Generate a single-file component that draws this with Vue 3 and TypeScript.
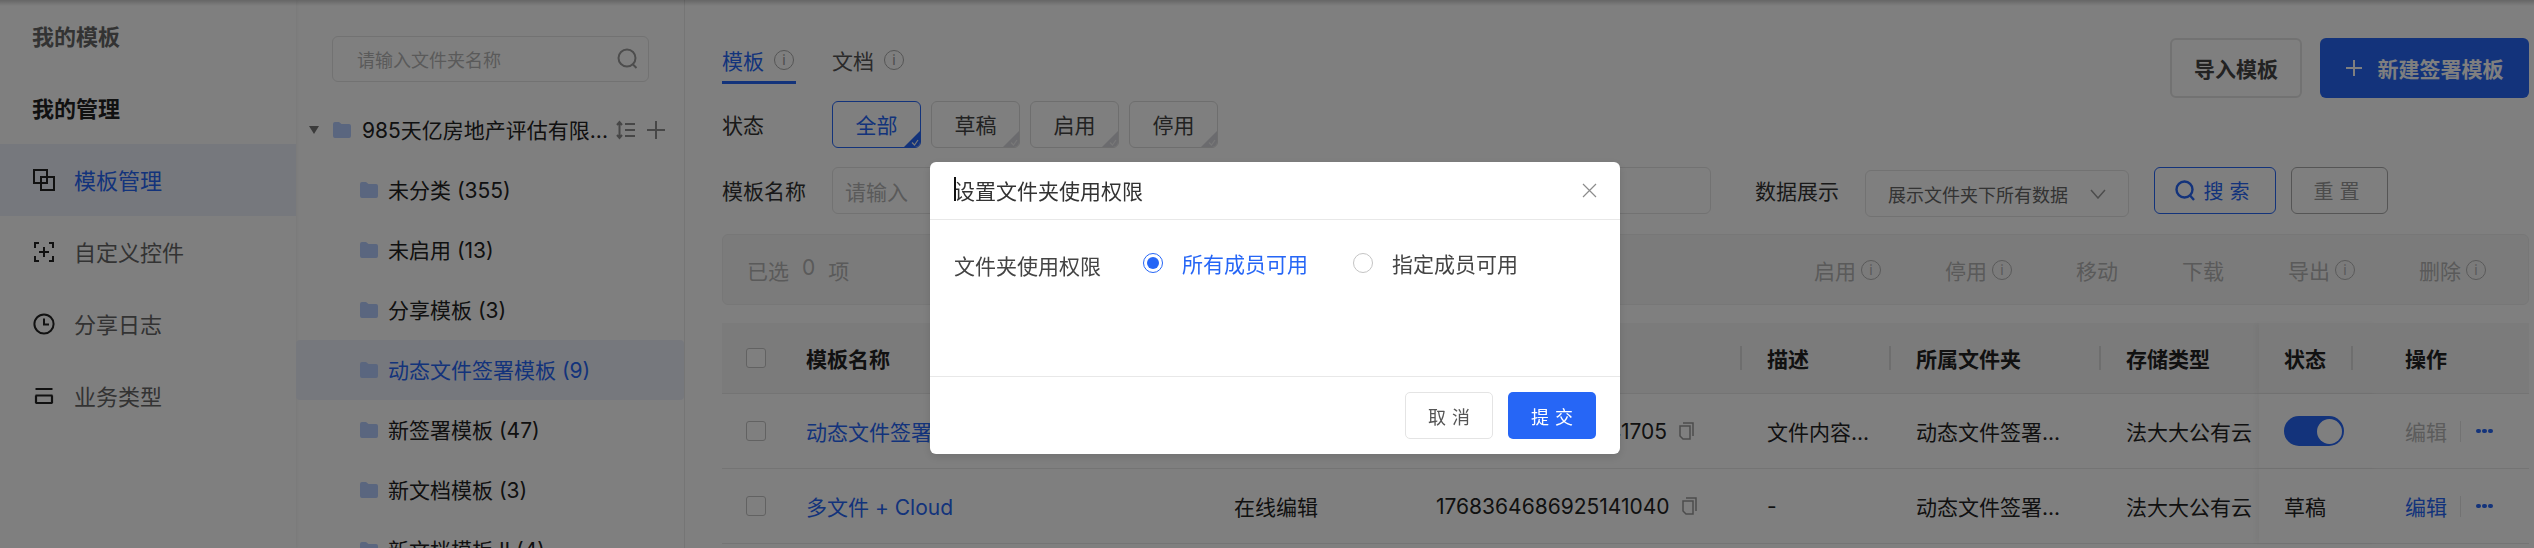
<script setup lang="ts">
import { ref } from 'vue'

interface FolderItem {
  name: string
  active?: boolean
}

interface TemplateRow {
  name: string
  editMode: string
  id: string
  desc: string
  folder: string
  storage: string
  enabled: boolean
  statusText: string
}

const chips = ['全部', '草稿', '启用', '停用']
const activeChip = ref('全部')

const folders: FolderItem[] = [
  { name: '未分类 (355)' },
  { name: '未启用 (13)' },
  { name: '分享模板 (3)' },
  { name: '动态文件签署模板 (9)', active: true },
  { name: '新签署模板 (47)' },
  { name: '新文档模板 (3)' },
  { name: '新文档模板 II (4)' }
]

const actions = [
  { label: '启用', tip: true },
  { label: '停用', tip: true },
  { label: '移动', tip: false },
  { label: '下载', tip: false },
  { label: '导出', tip: true },
  { label: '删除', tip: true }
]

const rows: TemplateRow[] = [
  {
    name: '动态文件签署模板',
    editMode: '在线编辑',
    id: '1768364686925141705',
    desc: '文件内容...',
    folder: '动态文件签署...',
    storage: '法大大公有云',
    enabled: true,
    statusText: ''
  },
  {
    name: '多文件 + Cloud',
    editMode: '在线编辑',
    id: '1768364686925141040',
    desc: '-',
    folder: '动态文件签署...',
    storage: '法大大公有云',
    enabled: false,
    statusText: '草稿'
  }
]

const permission = ref('all')
</script>

<template>
  <div class="page">
    <!-- 左侧菜单 -->
    <aside class="sidebar">
      <div class="menu-title muted">我的模板</div>
      <div class="menu-title">我的管理</div>
      <div class="menu-item active">
        <svg class="menu-icon" viewBox="0 0 22 22" fill="none" stroke="#222" stroke-width="2">
          <rect x="1" y="1" width="13" height="13" />
          <rect x="8" y="8" width="13" height="13" />
        </svg>
        <span>模板管理</span>
      </div>
      <div class="menu-item">
        <svg class="menu-icon" viewBox="0 0 22 22" fill="none" stroke="#222" stroke-width="2">
          <path d="M6 2H2v5M16 2h4v5M6 20H2v-5M16 20h4v-5M11 6v10M6 11h10" />
        </svg>
        <span>自定义控件</span>
      </div>
      <div class="menu-item">
        <svg class="menu-icon" viewBox="0 0 22 22" fill="none" stroke="#222" stroke-width="2">
          <circle cx="11" cy="11" r="9.6" />
          <path d="M11 5.5V11.5H16" />
        </svg>
        <span>分享日志</span>
      </div>
      <div class="menu-item">
        <svg class="menu-icon" viewBox="0 0 22 22" fill="none" stroke="#222" stroke-width="2.2">
          <path d="M2.5 4H19.5M2.5 10.5H19.5M2.5 18H19.5M3 10.5V18M19 10.5V18" />
        </svg>
        <span>业务类型</span>
      </div>
    </aside>

    <!-- 文件夹 -->
    <section class="folders">
      <div class="folder-search">
        <span>请输入文件夹名称</span>
        <svg width="21" height="22" viewBox="0 0 21 22" fill="none" stroke="#9a9a9a" stroke-width="2">
          <circle cx="10" cy="10" r="8.5" />
          <path d="M16 16.5L19.5 20" />
        </svg>
      </div>
      <div class="folder-root">
        <span class="tree-arrow"></span>
        <svg class="folder-icon" viewBox="0 0 18 16"><path d="M0 2a2 2 0 0 1 2-2h4l2.5 2H16a2 2 0 0 1 2 2v10a2 2 0 0 1-2 2H2a2 2 0 0 1-2-2z" /></svg>
        <span class="root-name">985天亿房地产评估有限...</span>
        <svg class="root-sort" width="19" height="20" viewBox="0 0 19 20" fill="none" stroke="#8f8f8f" stroke-width="2">
          <path d="M9 4H19M9 10H19M9 16H19M3.5 2V18M1 5L3.5 2L6 5M1 15L3.5 18L6 15" />
        </svg>
        <svg class="root-add" width="18" height="18" viewBox="0 0 18 18" fill="none" stroke="#8f8f8f" stroke-width="2">
          <path d="M9 0V18M0 9H18" />
        </svg>
      </div>
      <div
        v-for="item in folders"
        :key="item.name"
        class="folder-row"
        :class="{ active: item.active }"
      >
        <svg class="folder-icon" viewBox="0 0 18 16"><path d="M0 2a2 2 0 0 1 2-2h4l2.5 2H16a2 2 0 0 1 2 2v10a2 2 0 0 1-2 2H2a2 2 0 0 1-2-2z" /></svg>
        <span>{{ item.name }}</span>
      </div>
    </section>

    <!-- 主内容 -->
    <main class="main">
      <div class="head">
        <div class="tabs">
          <div class="tab active">
            <span>模板</span>
            <span class="info"><i>i</i></span>
          </div>
          <div class="tab">
            <span>文档</span>
            <span class="info"><i>i</i></span>
          </div>
        </div>
        <div class="head-btns">
          <button class="btn-import" type="button">导入模板</button>
          <button class="btn-new" type="button">
            <svg width="16" height="16" viewBox="0 0 16 16" fill="none" stroke="#fff" stroke-width="2">
              <path d="M8 0V16M0 8H16" />
            </svg>
            新建签署模板
          </button>
        </div>
      </div>

      <div class="status-row">
        <label class="field-label">状态</label>
        <div class="chips">
          <div
            v-for="chip in chips"
            :key="chip"
            class="chip"
            :class="{ active: chip === activeChip }"
          >
            {{ chip }}
            <svg class="chip-corner" viewBox="0 0 18 18">
              <path d="M18 0V14a4 4 0 0 1-4 4H0z" />
              <path class="tick" d="M9 12.5L11.5 15L15 10" />
            </svg>
          </div>
        </div>
      </div>

      <div class="filter-row">
        <label class="field-label">模板名称</label>
        <div class="name-input">请输入</div>
        <label class="field-label data-label">数据展示</label>
        <div class="select">
          <span>展示文件夹下所有数据</span>
          <svg width="16" height="10" viewBox="0 0 16 10" fill="none" stroke="#9a9a9a" stroke-width="1.5">
            <path d="M1 1L8 9L15 1" />
          </svg>
        </div>
        <button class="btn-search" type="button">
          <svg width="20" height="21" viewBox="0 0 20 21" fill="none" stroke="#2666f6" stroke-width="2.4">
            <circle cx="9.5" cy="9.5" r="8" />
            <path d="M15 15.5L19 20" />
          </svg>
          <span>搜索</span>
        </button>
        <button class="btn-reset" type="button">重置</button>
      </div>

      <div class="bulk-bar">
        <div class="selected"><span>已选</span><span>0</span><span>项</span></div>
        <div class="bulk-actions">
          <div v-for="a in actions" :key="a.label" class="bulk-action">
            <span>{{ a.label }}</span>
            <span v-if="a.tip" class="info"><i>i</i></span>
          </div>
        </div>
      </div>

      <div class="table">
        <div class="tr th">
          <div class="cell"><span class="check"></span></div>
          <div class="cell">模板名称</div>
          <div class="cell sep">编辑方式</div>
          <div class="cell sep">模板ID</div>
          <div class="cell sep">描述</div>
          <div class="cell sep">所属文件夹</div>
          <div class="cell sep">存储类型</div>
          <div class="cell fixed first">状态</div>
          <div class="cell fixed last sep">操作</div>
        </div>
        <div v-for="row in rows" :key="row.id" class="tr">
          <div class="cell"><span class="check"></span></div>
          <div class="cell link">{{ row.name }}</div>
          <div class="cell">{{ row.editMode }}</div>
          <div class="cell">
            {{ row.id }}
            <svg class="copy" width="15" height="18" viewBox="0 0 15 18" fill="none" stroke="#999" stroke-width="1.5">
              <path d="M4 1H14V14" />
              <path d="M1 4H11V17H4L1 14Z" />
            </svg>
          </div>
          <div class="cell">{{ row.desc }}</div>
          <div class="cell">{{ row.folder }}</div>
          <div class="cell">{{ row.storage }}</div>
          <div class="cell fixed first">
            <span v-if="row.enabled" class="switch"><span></span></span>
            <template v-else>{{ row.statusText }}</template>
          </div>
          <div class="cell fixed last">
            <span class="edit" :class="{ disabled: row.enabled }">编辑</span>
            <span class="op-line"></span>
            <span class="dots"><i></i><i></i><i></i></span>
          </div>
        </div>
      </div>
    </main>

    <!-- 弹窗 -->
    <div class="mask">
      <div class="modal">
        <div class="modal-header">
          <div class="modal-title">设置文件夹使用权限</div>
          <svg width="15" height="15" viewBox="0 0 15 15" fill="none" stroke="#8c8c8c" stroke-width="1.2">
            <path d="M1 1L14 14M14 1L1 14" />
          </svg>
        </div>
        <div class="modal-body">
          <span class="perm-label">文件夹使用权限</span>
          <div class="radio" :class="{ on: permission === 'all' }">
            <span class="radio-dot"></span>
            <span>所有成员可用</span>
          </div>
          <div class="radio" :class="{ on: permission === 'some' }">
            <span class="radio-dot"></span>
            <span>指定成员可用</span>
          </div>
        </div>
        <div class="modal-footer">
          <button class="btn-cancel" type="button">取消</button>
          <button class="btn-submit" type="button">提交</button>
        </div>
      </div>
    </div>
  </div>
</template>

<style scoped>
.page {
  position: relative;
  display: flex;
  width: 2534px;
  height: 548px;
  overflow: hidden;
  background: #fff;
  color: #222;
  font-family: Inter, "Noto Sans CJK SC", sans-serif;
  font-size: 21px;
}

/* 顶部栏留下的阴影 */
.page::before {
  content: "";
  position: absolute;
  left: 0;
  right: 0;
  top: 0;
  height: 6px;
  background: linear-gradient(rgba(0, 0, 0, 0.2), rgba(0, 0, 0, 0));
}

button {
  font-family: inherit;
  cursor: pointer;
}

/* 左侧菜单 */
.sidebar {
  width: 296px;
  flex-shrink: 0;
  box-shadow: 1px 0 3px rgba(0, 0, 0, 0.05);
}

.menu-title {
  height: 72px;
  padding: 0 0 3px 32px;
  box-sizing: border-box;
  display: flex;
  align-items: center;
  font-size: 22px;
  font-weight: 700;
  color: #222;
}

.menu-title.muted {
  color: #666;
}

.menu-item {
  height: 72px;
  padding-left: 33px;
  display: flex;
  align-items: center;
  gap: 19px;
  font-size: 22px;
  color: #666;
}

.menu-item span {
  margin-bottom: 3px;
}

.menu-item.active {
  background: #edf0fa;
  color: #2666f6;
}

.menu-icon {
  width: 22px;
  height: 22px;
}

/* 文件夹 */
.folders {
  width: 389px;
  flex-shrink: 0;
  padding-top: 36px;
  border-right: 1px solid #eaeaea;
  box-sizing: border-box;
}

.folder-search {
  width: 317px;
  height: 46px;
  margin: 0 0 18px 36px;
  padding: 0 10px 0 24px;
  box-sizing: border-box;
  display: flex;
  align-items: center;
  justify-content: space-between;
  border: 1px solid #e4e4e4;
  border-radius: 6px;
  font-size: 18px;
  color: #b5b5b5;
}

.folder-root {
  height: 60px;
  display: flex;
  align-items: center;
  padding-left: 13px;
}

.tree-arrow {
  width: 0;
  height: 0;
  border-left: 5px solid transparent;
  border-right: 5px solid transparent;
  border-top: 8px solid #777;
  margin-right: 14px;
}

.folder-icon {
  width: 18px;
  height: 16px;
  fill: #b4ccff;
  flex-shrink: 0;
}

.root-name {
  margin: 0 0 2px 11px;
  white-space: nowrap;
  width: 254px;
  overflow: hidden;
}

.root-add {
  margin-left: 12px;
}

.folder-row {
  height: 60px;
  display: flex;
  align-items: center;
  gap: 10px;
  padding-left: 64px;
  border-radius: 4px;
}

.folder-row span {
  margin-bottom: 2px;
}

.folder-row.active {
  background: #edf0fa;
  color: #2666f6;
}

/* 主内容 */
.main {
  flex: 1;
  min-width: 0;
  padding: 38px 5px 0 37px;
}

.head {
  display: flex;
  justify-content: space-between;
  height: 60px;
}

.tabs {
  display: flex;
  gap: 36px;
}

.tab {
  height: 46px;
  display: flex;
  align-items: center;
  gap: 10px;
  color: #555;
  box-sizing: border-box;
  padding-right: 2px;
  border-bottom: 3px solid transparent;
}

.tab.active {
  color: #2666f6;
  border-bottom-color: #2666f6;
}

.info {
  width: 20px;
  height: 20px;
  border: 1.5px solid #aaa;
  border-radius: 50%;
  box-sizing: border-box;
  display: inline-flex;
  align-items: center;
  justify-content: center;
  color: #999;
  font-size: 14px;
  line-height: 1;
}

.info i {
  font-style: normal;
}

.head-btns {
  display: flex;
  gap: 18px;
}

.btn-import {
  width: 132px;
  height: 60px;
  background: #fff;
  border: 2px solid #e4e4e4;
  border-radius: 6px;
  font-size: 21px;
  font-weight: 700;
  color: #444;
}

.btn-new {
  width: 209px;
  height: 60px;
  background: #2666f6;
  border: 0;
  border-radius: 6px;
  color: #fff;
  font-size: 21px;
  font-weight: 700;
  display: flex;
  align-items: center;
  justify-content: center;
  gap: 16px;
}

.status-row {
  display: flex;
  align-items: center;
  margin-top: 3px;
}

.field-label {
  width: 110px;
  flex-shrink: 0;
  color: #333;
  margin-bottom: 2px;
}

.chips {
  display: flex;
  gap: 10px;
}

.chip {
  position: relative;
  width: 89px;
  height: 47px;
  box-sizing: border-box;
  padding-bottom: 2px;
  display: flex;
  align-items: center;
  justify-content: center;
  border: 1px solid #dcdcdc;
  border-radius: 6px;
  color: #444;
  overflow: hidden;
}

.chip.active {
  border-color: #2666f6;
  color: #2666f6;
}

.chip-corner {
  position: absolute;
  right: -1px;
  bottom: -1px;
  width: 18px;
  height: 18px;
  fill: #d6d6dc;
}

.chip.active .chip-corner {
  fill: #2666f6;
}

.chip-corner .tick {
  fill: none;
  stroke: #f0f0f0;
  stroke-width: 1.2;
}

.filter-row {
  display: flex;
  align-items: center;
  margin-top: 19px;
  height: 47px;
}

.name-input {
  width: 879px;
  height: 47px;
  box-sizing: border-box;
  padding-left: 12px;
  display: flex;
  align-items: center;
  border: 1px solid #e4e4e4;
  border-radius: 6px;
  color: #b5b5b5;
  flex-shrink: 0;
}

.data-label {
  margin-left: 44px;
}

.select {
  width: 264px;
  height: 47px;
  margin-top: 6px;
  flex-shrink: 0;
  box-sizing: border-box;
  padding: 0 22px;
  display: flex;
  align-items: center;
  justify-content: space-between;
  border: 1px solid #e4e4e4;
  border-radius: 6px;
  font-size: 18px;
  color: #666;
  white-space: nowrap;
}

.btn-search,
.btn-reset {
  height: 47px;
  background: #fff;
  border-radius: 6px;
  font-size: 20px;
  letter-spacing: 6px;
  padding: 0;
  display: flex;
  align-items: center;
  justify-content: center;
  flex-shrink: 0;
}

.btn-search {
  width: 122px;
  margin-left: 25px;
  gap: 9px;
  border: 1px solid #2666f6;
  color: #2666f6;
}

.btn-reset {
  width: 97px;
  margin-left: 15px;
  border: 1px solid #aaa;
  color: #999;
}

.bulk-bar {
  height: 71px;
  margin-top: 20px;
  box-sizing: border-box;
  padding: 0 42px 0 24px;
  display: flex;
  align-items: center;
  justify-content: space-between;
  background: #f7f7f7;
  border: 1px solid #eeeeee;
  border-radius: 6px;
  color: #b4b4b4;
}

.selected {
  display: flex;
  gap: 13px;
}

.bulk-actions {
  display: flex;
  gap: 64px;
}

.bulk-action {
  display: flex;
  align-items: center;
  gap: 5px;
}

.bulk-action .info {
  border-color: #b4b4b4;
  color: #b4b4b4;
}

.table {
  margin-top: 18px;
}

.tr {
  display: grid;
  grid-template-columns: 84px 428px 202px 331px 149px 210px 133px 119px 1fr;
  height: 75px;
  box-sizing: border-box;
  border-bottom: 1px solid #e8e8e8;
}

.tr.th {
  height: 71px;
  background: #f7f7f7;
  font-weight: 700;
  color: #222;
}

.cell {
  position: relative;
  display: flex;
  align-items: center;
  white-space: nowrap;
}

.cell.sep::before {
  content: "";
  position: absolute;
  left: -27px;
  top: 23px;
  width: 2px;
  height: 24px;
  background: #dcdcdc;
}

.cell.fixed {
  background: #fff;
}

.th .cell.fixed {
  background: #f7f7f7;
}

.cell.first {
  padding-left: 25px;
  box-shadow: -4px 0 5px rgba(0, 0, 0, 0.035);
}

.cell.last {
  padding-left: 27px;
}

.check {
  width: 20px;
  height: 20px;
  margin-left: 24px;
  box-sizing: border-box;
  border: 1px solid #c4c4c4;
  border-radius: 3px;
  background: #fff;
}

.link {
  color: #2666f6;
}

.copy {
  margin-left: 12px;
}

.switch {
  width: 60px;
  height: 30px;
  border-radius: 15px;
  background: #2666f6;
  display: flex;
  align-items: center;
  justify-content: flex-end;
  padding-right: 2px;
  box-sizing: border-box;
}

.switch span {
  width: 25px;
  height: 25px;
  border-radius: 50%;
  background: #fff;
}

.edit {
  color: #2666f6;
}

.edit.disabled {
  color: #b8b8b8;
}

.op-line {
  width: 1px;
  height: 21px;
  margin: 0 15px 0 13px;
  background: #e4e4e4;
}

.dots {
  display: flex;
  gap: 1.5px;
}

.dots i {
  width: 4.5px;
  height: 4.5px;
  border-radius: 50%;
  background: #2666f6;
}

/* 弹窗 */
.mask {
  position: absolute;
  inset: 0;
  background: rgba(0, 0, 0, 0.5);
  backdrop-filter: blur(0.6px);
  padding: 162px 0 0 930px;
  box-sizing: border-box;
}

.modal {
  width: 690px;
  height: 292px;
  display: flex;
  flex-direction: column;
  background: #fff;
  border-radius: 6px;
  box-shadow: 0 3px 10px rgba(0, 0, 0, 0.12);
}

.modal-header {
  height: 58px;
  flex-shrink: 0;
  padding: 0 23px 0 24px;
  box-sizing: border-box;
  display: flex;
  align-items: center;
  justify-content: space-between;
  border-bottom: 1px solid #e8e8e8;
}

.modal-title {
  position: relative;
  color: #333;
  margin-bottom: 2px;
}

.modal-title::before {
  content: "";
  position: absolute;
  left: 0;
  top: 2px;
  width: 1.5px;
  height: 24px;
  background: #111;
}

.modal-body {
  flex: 1;
  padding: 28px 0 0 24px;
  display: flex;
  align-items: flex-start;
  color: #444;
}

.perm-label {
  width: 189px;
  margin-top: 2px;
  flex-shrink: 0;
}

.radio {
  display: flex;
  align-items: center;
  gap: 19px;
  width: 210px;
  color: #444;
}

.radio.on {
  color: #2666f6;
}

.radio-dot {
  width: 20px;
  height: 20px;
  box-sizing: border-box;
  border: 1px solid #c4c4c4;
  border-radius: 50%;
  display: flex;
  align-items: center;
  justify-content: center;
}

.radio.on .radio-dot {
  border-color: #2666f6;
}

.radio.on .radio-dot::after {
  content: "";
  width: 12px;
  height: 12px;
  border-radius: 50%;
  background: #2666f6;
}

.modal-footer {
  height: 78px;
  flex-shrink: 0;
  box-sizing: border-box;
  padding: 0 24px;
  display: flex;
  align-items: center;
  justify-content: flex-end;
  gap: 15px;
  border-top: 1px solid #e8e8e8;
}

.btn-cancel,
.btn-submit {
  width: 88px;
  height: 47px;
  border-radius: 5px;
  font-size: 18px;
  letter-spacing: 6px;
  padding: 0 0 0 6px;
}

.btn-cancel {
  background: #fff;
  border: 1px solid #e4e4e4;
  color: #555;
}

.btn-submit {
  background: #2666f6;
  border: 0;
  color: #fff;
}
</style>
